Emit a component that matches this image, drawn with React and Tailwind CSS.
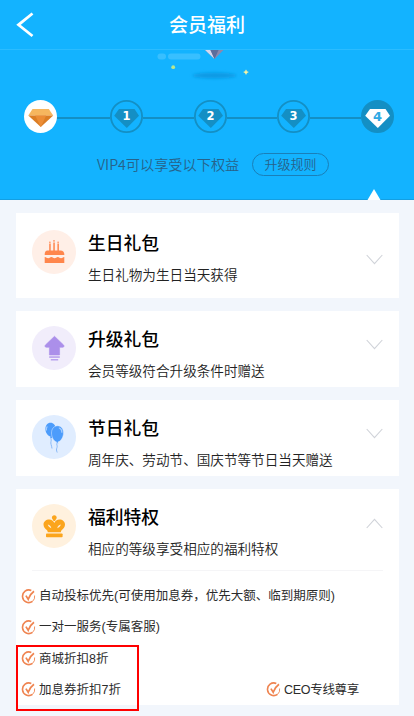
import { useState } from 'react';
import clsx from 'clsx';

const levels = [0, 1, 2, 3, 4];

const CakeIcon = () => (
  <svg width="44" height="44" viewBox="0 0 44 44">
    <circle cx="22" cy="22" r="22" fill="#ffefe7" />
    <g fill="#ff864c">
      <path d="M17.200 13.500h1.500V21h-1.500zM21.300 12.500h1.500V21h-1.500zM25.400 13.500h1.500V21h-1.500z" />
      <circle cx="17.900" cy="12.200" r=".8" />
      <circle cx="22" cy="10.900" r=".8" />
      <circle cx="26.100" cy="12.200" r=".8" />
      <path d="M15.500 20.500h13c2.300 0 3.800 1.700 3.800 3.600v1H12.700v-1c0-1.900 1-3.600 2.800-3.600z" />
      <path d="M12.700 27c1.600 0 2.200 1.300 3.500 1.300s1.800-1.300 3.200-1.300 1.900 1.300 3.200 1.300 1.800-1.300 3.200-1.300 1.900 1.300 3.200 1.300 1.800-1.300 3.300-1.300v6H12.700z" />
    </g>
  </svg>
);

const UpgradeIcon = () => (
  <svg width="44" height="44" viewBox="0 0 44 44">
    <circle cx="22" cy="22" r="22" fill="#f1edfb" />
    <g fill="#ab8fea">
      <path d="M22.500 10.300l9.100 8.700c.8.900.4 2.300-.8 2.300h-3.200v7.700H17.400v-7.700h-3.200c-1.200 0-1.600-1.400-.8-2.300z" stroke="#ab8fea" strokeWidth=".6" strokeLinejoin="round" />
      <rect x="17.200" y="30.400" width="10.600" height="1.300" />
      <rect x="18.800" y="33.200" width="7.400" height="1.200" />
    </g>
  </svg>
);

const BalloonIcon = () => (
  <svg width="44" height="44" viewBox="0 0 44 44">
    <circle cx="22" cy="22" r="22" fill="#e0edff" />
    <path d="M19 21.500c-.6 2 .7 3 0 5s.6 3.500 1 7" stroke="#8abaf8" strokeWidth="1" fill="none" />
    <path d="M25 27.500c-.8 2.500.8 3 0 5s-.6 3 .2 5" stroke="#8abaf8" strokeWidth="1" fill="none" />
    <path d="M18.500 7.800c3 0 5.200 2.600 5.200 6 0 4-2.200 7.400-4 7.900l.7 1.300h-2l.3-1.300c-2.600-.7-5.300-4-5.300-7.700 0-3.500 2.100-6.200 5.100-6.200z" fill="#4c9cfb" />
    <path d="M25.500 10.800c3.600 0 6 3 6 7 0 4.500-2.700 8.700-5.700 9.200l.6 1.500h-2.200l.4-1.500c-3-.8-5.100-4.900-5.100-9 0-4.200 2.500-7.200 6-7.200z" fill="#4c9cfb" stroke="#e0edff" strokeWidth=".5" />
    <path d="M27.300 13c1.700.7 2.600 2.300 2.600 4.300M15 11.800c-.6.900-.8 2-.6 3.200" stroke="#a5cdff" strokeWidth="1.200" fill="none" strokeLinecap="round" />
  </svg>
);

const CrownIcon = () => (
  <svg width="44" height="44" viewBox="0 0 44 44">
    <circle cx="22" cy="22" r="22" fill="#fff1de" />
    <g fill="#fba51d">
      <path d="M22.300 11.300c1.500 0 2.400 1.100 2.400 2.300 0 1.300-1.200 2-1.600 3.400h-1.600c-.4-1.400-1.600-2.100-1.600-3.400 0-1.200.9-2.300 2.400-2.300z" />
      <path d="M22.300 19c.9-2.200 2.800-3.600 5-3.600 3.300 0 5.700 2.100 5.700 5 0 2.400-1.600 4.200-3.200 5.600-.6.600-.9 1.200-.9 2.300H15.700c0-1.100-.3-1.700-.9-2.300-1.600-1.400-3.300-3.200-3.300-5.600 0-2.900 2.500-5 5.800-5 2.200 0 4.100 1.400 5 3.600z" />
      <rect x="14" y="29.500" width="16.600" height="3.700" rx=".8" />
    </g>
    <path d="M15.800 20.600c1.800.5 3.200 1.800 3.500 3.600-1.800-.4-3.100-1.800-3.500-3.600zM28.800 20.600c-1.800.5-3.200 1.800-3.500 3.600 1.800-.4 3.100-1.800 3.500-3.600z" fill="#fff1de" />
  </svg>
);

const sections = [
  { title: '生日礼包', desc: '生日礼物为生日当天获得', icon: CakeIcon, className: 'h-[85px] pt-[17px]', arrow: 'mt-[24px]' },
  { title: '升级礼包', desc: '会员等级符合升级条件时赠送', icon: UpgradeIcon, className: 'h-[76px] pt-[15px]', arrow: 'mt-[13px]' },
  { title: '节日礼包', desc: '周年庆、劳动节、国庆节等节日当天赠送', icon: BalloonIcon, className: 'h-[76px] pt-[15px]', arrow: 'mt-[13px]' },
  { title: '福利特权', desc: '相应的等级享受相应的福利特权', icon: CrownIcon, className: 'h-[81px] pt-[15px]', arrow: 'mt-[14px]' },
];

const Level = ({ level }) => {
  if (level === 0) {
    return (
      <svg className="shrink-0" width="33" height="33" viewBox="0 0 33 33">
        <circle cx="16.500" cy="16.500" r="16.500" fill="#fff" />
        <path d="M8.500 9h16.300l4.400 6.500H4.300z" fill="#f6b65e" />
        <path d="M4.300 15.500h24.900L16.800 27z" fill="#db7e25" />
        <path d="M11.200 15.500h11L16.800 27z" fill="#ec8d35" />
      </svg>
    );
  }
  const current = level === 4;
  return (
    <svg className="shrink-0" width="33" height="33" viewBox="0 0 33 33">
      <circle cx="16.500" cy="16.500" r="15.600" fill={current ? '#148fc4' : 'none'} stroke="#148fc4" strokeWidth="1.800" />
      <path d="M9 9h15.500l4.500 6.800L16.800 28 4.200 15.800z" fill={current ? '#fff' : '#148fc4'} />
      <text
        x="16.600" y={current ? 20.5 : 20} textAnchor="middle" fill={current ? '#2fa9e4' : '#fff'}
        className={clsx("font-['DejaVu_Sans',sans-serif] font-bold", current ? 'text-[13px]' : 'text-[11.5px]')}
      >
        {level}
      </text>
    </svg>
  );
};

const Chevron = ({ up, className }) => (
  <svg className={clsx('ml-auto shrink-0', up && 'rotate-180', className)} width="17" height="11" viewBox="0 0 17 11">
    <path d="M.7 1l7.800 8.700L16.300 1" fill="none" stroke="#d0d3d9" strokeWidth="1.100" />
  </svg>
);

const Privilege = ({ children, className }) => (
  <div className={clsx('flex h-[31.2px] items-center text-[12.5px] whitespace-nowrap text-[#2b2b2b]', className)}>
    <svg className="mr-[3px] mb-[1px] shrink-0" width="15" height="15" viewBox="0 0 15 15" fill="none" stroke="#ef8450">
      <path d="M10.300 1.500A6.300 6.300 0 1 0 11.500 12.400" strokeWidth="1.600" />
      <path d="M11.500 12.400A6.300 6.300 0 0 0 13.600 6.500" strokeWidth=".9" />
      <path d="M4.900 6.600l2.300 3.600C8.300 7 10 4.500 13 2.300" strokeWidth="1.700" />
    </svg>
    {children}
  </div>
);

export default function App() {
  const [open, setOpen] = useState(3);

  return (
    <div className="h-[716px] w-[414px] overflow-hidden bg-[#f2f6fc] font-['Liberation_Sans','Noto_Sans_CJK_SC',sans-serif]">
      <header className="grid h-[50px] grid-cols-[60px_1fr_60px] items-center border-b border-[#2bbcff] bg-[#13b3ff]">
        <svg className="ml-[16px]" width="19" height="26" viewBox="0 0 19 26">
          <path d="M16.500 1.500L2.500 12.800l14 11.200" fill="none" stroke="#fff" strokeWidth="2.800" />
        </svg>
        <h1 className="pt-[2px] text-center text-[19px] leading-[28px] font-medium text-white">会员福利</h1>
      </header>

      <section className="relative h-[150px] border-b border-[#149fe2] bg-[#13b3ff]">
        <svg className="block" width="414" height="50" viewBox="0 50 414 50">
          <g fill="#38bfff">
            <rect x="157.500" y="53.500" width="8.500" height="6" rx="3" />
            <rect x="168" y="53.500" width="32.500" height="6" rx="3" />
          </g>
          <path d="M204 49h20.500L214.500 59z" fill="#8c87ad" />
          <path d="M204 49h6l4.500 10z" fill="#d5d8ee" />
          <path d="M210 49h9l-4.500 10z" fill="#5c6d9c" />
          <circle cx="173.200" cy="67.200" r="1.900" fill="#b8e790" />
          <path d="M246 69.800l.8 1.600 1.600.7-1.600.8-.8 1.600-.8-1.600-1.600-.8 1.600-.7z" fill="#fff6a0" stroke="#fff6a0" strokeWidth=".4" />
          <defs>
            <filter id="soft" x="-20%" y="-80%" width="140%" height="260%"><feGaussianBlur stdDeviation="1.600" /></filter>
          </defs>
          <ellipse cx="214.500" cy="75.500" rx="22" ry="3" fill="#0c9ae4" filter="url(#soft)" />
        </svg>
        <div className="flex items-center pr-[20px] pl-[24px]">
          {levels.map((level) => (
            <div key={level} className={clsx('flex items-center', level > 1 && 'flex-1')}>
              {level > 0 && <span className={clsx('mt-[2px] h-[2px] bg-[#148fc4]', level === 1 ? 'w-[53px]' : 'flex-1')} />}
              <Level level={level} />
            </div>
          ))}
        </div>
        <div className="mt-[20px] flex h-[23px] items-center pl-[97px] text-[#27628a]">
          <p className="mt-[-2px] w-[155px] text-[14.2px] leading-[22px] font-[350] whitespace-nowrap font-['Noto_Sans_CJK_SC',sans-serif]">VIP4可以享受以下权益</p>
          <button className="flex h-[23px] w-[77px] items-center justify-center rounded-full border border-[#1a7fb8] text-[13px] leading-[20px] font-[350]">升级规则</button>
        </div>
        <svg className="absolute bottom-[-1px] left-[367px]" width="14" height="11" viewBox="0 0 14 11">
          <path d="M7 0l6.500 11H.5z" fill="#fff" />
        </svg>
      </section>

      <main className="flex flex-col gap-[13px] pt-[13px] pr-[15px] pl-[16px]">
        {sections.map(({ title, desc, icon: Icon, className, arrow }, i) => (
          <div key={title} className="bg-white">
            <div className={clsx('flex items-start pr-[16px] pl-[16px]', className)} onClick={() => setOpen(i)}>
              <Icon />
              <div className="ml-[12px] pt-[1px] whitespace-nowrap">
                <h2 className="text-[17.8px] leading-[27px] font-medium text-black">{title}</h2>
                <p className="mt-[7px] text-[13.6px] leading-[22px] font-[350] text-[#222]">{desc}</p>
              </div>
              <Chevron up={open === i} className={arrow} />
            </div>
            {open === i && (
              <div className="h-[135px] pl-[5px]">
                <div className="mr-[16px] ml-[11px] h-px bg-[#f5f5f7]" />
                <div className="pt-[10px]">
                  <Privilege>自动投标优先(可使用加息券，优先大额、临到期原则)</Privilege>
                  <Privilege>一对一服务(专属客服)</Privilege>
                  <Privilege>商城折扣8折</Privilege>
                  <div className="flex">
                    <Privilege className="w-[245px]">加息券折扣7折</Privilege>
                    <Privilege className="tracking-[-0.3px]">CEO专线尊享</Privilege>
                  </div>
                </div>
              </div>
            )}
          </div>
        ))}
      </main>

      {/* highlight around the discount rows */}
      <div className="pointer-events-none absolute top-[645px] left-[16px] h-[66px] w-[123px] border-2 border-[#ff0000]" />
    </div>
  );
}
